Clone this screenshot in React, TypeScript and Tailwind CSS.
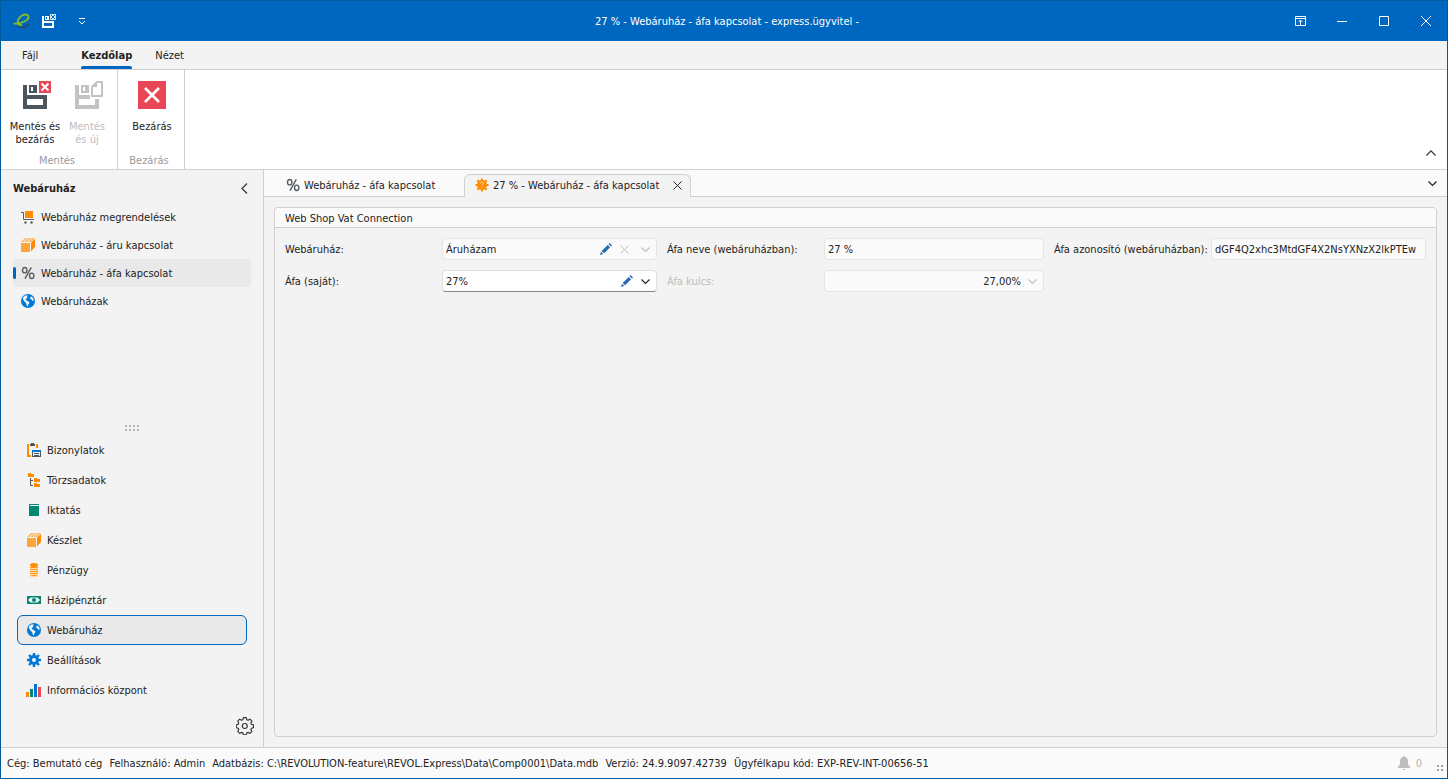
import type { ReactNode } from 'react';
import clsx from 'clsx';

type IconProps = { className?: string };

/* ---------- icons ---------- */

function Logo() {
  return (
    <svg width="18" height="16" viewBox="0 0 18 16" fill="none">
      <path d="M5 12.300c2.500 3 8 2.400 10.500-1.600" stroke="#1b4f7d" strokeWidth="2.200" />
      <path
        d="M.5 10.700c2.500 0 4.500-.2 7-.9C12.500 8.600 16 6 15.600 3.600 15.200 1.200 11.600.8 8.600 2.800 5.200 5 3.600 9 5.400 11.200c.9 1 2.200 1.200 3.600 1"
        stroke="#86bc25"
        strokeWidth="1.800"
      />
    </svg>
  );
}

function SaveCloseSmall() {
  return (
    <svg width="14" height="14" viewBox="0 0 14 14">
      <path fill="#fff" fillRule="evenodd" d="M0 2h2v5h10v7H0zM2 9v3h8V9z" />
      <path fill="#fff" fillRule="evenodd" d="M3 2h4v4H3zM4 3v2h1V3z" />
      <path fill="#cfe3f6" d="M8 0h6v6H8z" />
      <path stroke="#0067c0" d="M9 1l4 4M13 1L9 5" />
    </svg>
  );
}

function QuickMenu() {
  return (
    <svg width="8" height="8" viewBox="0 0 8 8" fill="none" stroke="#fff">
      <path d="M1 1.500h6M1 4l3 3 3-3" />
    </svg>
  );
}

function SaveClose() {
  return (
    <svg width="32" height="28" viewBox="-4 0 32 28">
      <path fill="#4d565c" fillRule="evenodd" d="M0 4h4v10h20v14H0zM4 18v6h16v-6z" />
      <path fill="#4d565c" fillRule="evenodd" d="M6 4h8v8H6zM8 6v4h2V6z" />
      <path fill="#e84855" d="M16 0h12v12H16z" />
      <path stroke="#fff" strokeWidth="2" d="M18.500 2.500l7 7M25.500 2.500l-7 7" />
    </svg>
  );
}

function SaveNew() {
  return (
    <svg width="32" height="28" viewBox="-4 0 32 28">
      <path fill="#c3c3c3" fillRule="evenodd" d="M0 4h4v10h11v4H4v6h16v-6h4v10H0z" />
      <path fill="#c3c3c3" fillRule="evenodd" d="M6 4h8v8H6zM8 6v4h2V6z" />
      <path fill="#fff" stroke="#c3c3c3" strokeWidth="2" d="M17 15V6l5-5h5v14z" />
      <path fill="#c3c3c3" d="M16 6l6-6v6z" />
    </svg>
  );
}

function CloseBig() {
  return (
    <svg width="28" height="28" viewBox="0 0 28 28">
      <path fill="#e84855" d="M0 0h28v28H0z" />
      <path stroke="#fff" strokeWidth="2.600" d="M7 7l14 14M21 7L7 21" />
    </svg>
  );
}

function Cross({ className }: IconProps) {
  return (
    <svg className={className} width="9" height="9" viewBox="0 0 9 9" fill="none" stroke="currentColor">
      <path d="M.5.5l8 8M8.500.5l-8 8" />
    </svg>
  );
}

function ChevronDown({ className }: IconProps) {
  return (
    <svg className={className} width="9" height="9" viewBox="0 0 9 9" fill="none" stroke="currentColor" strokeWidth="1.200">
      <path d="M.5 2.500l4 4 4-4" />
    </svg>
  );
}

function Pencil() {
  return (
    <svg width="12" height="12" viewBox="0 0 12 12" fill="#2469b3">
      <path d="M0 12l1-3.300L3.300 11zM1.700 7.900l6-6 2.400 2.400-6 6zM8.500 1.100L9.600 0 12 2.400l-1.100 1.100z" />
    </svg>
  );
}

function Cart() {
  return (
    <svg width="14" height="14" viewBox="0 0 14 14">
      <path fill="#ff8c00" d="M4 1h8v7H4z" />
      <path fill="none" stroke="#565e63" d="M0 2.500h2.500v7H13" />
      <circle cx="4.500" cy="12.500" r="1.200" fill="#565e63" />
      <circle cx="10.500" cy="12.500" r="1.200" fill="#565e63" />
    </svg>
  );
}

function Box() {
  return (
    <svg width="14" height="14" viewBox="0 0 14 14">
      <path fill="#ffa53a" d="M0 5h9v9H0z" />
      <path fill="#fbb968" d="M0 4l4-4h9.500L10 4z" />
      <path fill="#ff8c00" d="M10 4.500L14 .5V9l-4 4.500z" />
      <path stroke="#f3f3f3" d="M3 4l4-4M6.500 4l4-4" />
    </svg>
  );
}

function Percent() {
  return (
    <svg width="14" height="14" viewBox="0 0 14 14" fill="none" stroke="#565e63" strokeWidth="1.400">
      <ellipse cx="3.700" cy="4.200" rx="2.200" ry="2.700" />
      <ellipse cx="10.700" cy="9.800" rx="2.200" ry="2.700" />
      <path d="M10.300 1.300L4 12.700" />
    </svg>
  );
}

function Globe() {
  return (
    <svg width="14" height="14" viewBox="0 0 14 14">
      <circle cx="7" cy="7" r="7" fill="#0078d4" />
      <path
        fill="#f0f4f8"
        d="M2 3.200L4.800 1.300l2.200.5L5.800 3l.7.8-1.800 1.300.2 1L7.500 7.400l1.100 1.400-1.400 1.900-.4 2L5.700 11.200 5.100 9 3.400 7.400 1.900 5zM9.200 3.200l1.500-.6 1.600 1.800.5 2-1.200.7-1-1.500L9.300 5z"
      />
    </svg>
  );
}

function Documents() {
  return (
    <svg width="14" height="14" viewBox="0 0 14 14">
      <path fill="#ff8c00" d="M0 1h2v11h2v2H0zM9 1h2v4H9z" />
      <path fill="#4d565c" d="M3 1h1V0h3v1h1v2H3z" />
      <path fill="#4d565c" fillRule="evenodd" d="M5 7h9v7H5zM6 9v4h7V9z" />
      <path fill="#0078d4" d="M5 7h9v2H5z" />
      <path stroke="#4d565c" d="M7 10.500h5M7 12.500h5" />
    </svg>
  );
}

function FolderTree() {
  return (
    <svg width="14" height="14" viewBox="0 0 14 14">
      <path fill="#ff8c00" d="M1 0h3v1h3v3H1zM7 5h3v1h3v3H7zM7 10h3v1h3v3H7z" />
      <path fill="none" stroke="#4d565c" d="M3.500 5v7.500H6M3.500 7.500H6" />
    </svg>
  );
}

function Book() {
  return (
    <svg width="14" height="14" viewBox="0 0 14 14" fill="#008774">
      <path d="M2 1h10v1H3v1h9v10H2z" />
    </svg>
  );
}

function Coins() {
  return (
    <svg width="14" height="14" viewBox="0 0 14 14">
      <path fill="#ffd9a8" d="M3 2h8v12H3z" />
      <path stroke="#ff9a1f" d="M3 4.500h8M3 6.500h8M3 8.500h8M3 10.500h8M4 12.500h6" />
      <ellipse cx="7" cy="2" rx="4" ry="2" fill="#ff8c00" />
    </svg>
  );
}

function Banknote() {
  return (
    <svg width="14" height="14" viewBox="0 0 14 14">
      <path fill="#008774" d="M0 3h14v8H0z" />
      <path fill="#f3f3f3" d="M3.500 4.500h7l2 2v1l-2 2h-7l-2-2v-1z" />
      <circle cx="7" cy="7" r="2" fill="#008774" />
    </svg>
  );
}

function Cog() {
  return (
    <svg width="14" height="14" viewBox="0 0 14 14">
      <circle cx="7" cy="7" r="3.500" fill="none" stroke="#0078d4" strokeWidth="3" />
      <path
        stroke="#0078d4"
        strokeWidth="2.400"
        d="M7 0v3M7 11v3M0 7h3M11 7h3M2 2l2.200 2.200M9.800 9.800L12 12M12 2L9.800 4.200M4.200 9.800L2 12"
      />
    </svg>
  );
}

function Bars() {
  return (
    <svg width="16" height="14" viewBox="0 0 16 14">
      <path fill="#ff8c00" d="M0 9h3v5H0z" />
      <path fill="#008774" d="M4 6h3v8H4z" />
      <path fill="#0078d4" d="M8 1h3v13H8z" />
      <path fill="#e84855" d="M12 4h3v10h-3z" />
    </svg>
  );
}

function OrangeCog() {
  return (
    <svg width="14" height="14" viewBox="0 0 14 14">
      <circle cx="7" cy="7" r="5" fill="#ff8c00" />
      <path stroke="#ff8c00" strokeWidth="2.200" d="M7 .5v13M.5 7h13M2.300 2.300l9.400 9.400M11.700 2.300l-9.400 9.400" />
      <path fill="none" stroke="#ffe0b5" d="M5.500 5.500c0-2 3-2 3 0 0 1-1.500 1-1.500 2.300M7 9v1" />
    </svg>
  );
}

function GearOutline() {
  const body =
    'M7.500 1.200h3l.6 2.200 1.300.5 2-1.100 2.100 2.100-1.100 2 .5 1.300 2.200.6v3l-2.200.6-.5 1.300 1.100 2-2.100 2.100-2-1.100-1.300.5-.6 2.200h-3l-.6-2.200-1.300-.5-2 1.100-2.100-2.100 1.100-2-.5-1.300-2.200-.6v-3l2.200-.6.5-1.300-1.100-2 2.100-2.100 2 1.100 1.300-.5z';
  return (
    <svg width="18" height="18" viewBox="-0.300 0.500 19 19" fill="none" stroke="#333" strokeWidth="1.200" strokeLinejoin="round">
      <path d={body} />
      <circle cx="9" cy="10" r="2.600" />
    </svg>
  );
}

function Bell() {
  return (
    <svg width="12" height="14" viewBox="0 0 12 14" fill="#bdbdbd">
      <path d="M5 1a1 1 0 012 0c2 .5 3 2 3 4v3.500l2 2V12H0v-1.500l2-2V5c0-2 1-3.500 3-4zM4.800 13h2.400v1H4.800z" />
    </svg>
  );
}

/* ---------- data ---------- */

const shopItems = [
  { icon: Cart, label: 'Webáruház megrendelések' },
  { icon: Box, label: 'Webáruház - áru kapcsolat' },
  { icon: Percent, label: 'Webáruház - áfa kapcsolat', active: true },
  { icon: Globe, label: 'Webáruházak' },
];

const modules = [
  { icon: Documents, label: 'Bizonylatok' },
  { icon: FolderTree, label: 'Törzsadatok' },
  { icon: Book, label: 'Iktatás' },
  { icon: Box, label: 'Készlet' },
  { icon: Coins, label: 'Pénzügy' },
  { icon: Banknote, label: 'Házipénztár' },
  { icon: Globe, label: 'Webáruház', active: true },
  { icon: Cog, label: 'Beállítások' },
  { icon: Bars, label: 'Információs központ' },
];

const statusItems = [
  'Cég: Bemutató cég',
  'Felhasználó: Admin',
  'Adatbázis: C:\\REVOLUTION-feature\\REVOL.Express\\Data\\Comp0001\\Data.mdb',
  'Verzió: 24.9.9097.42739',
  'Ügyfélkapu kód: EXP-REV-INT-00656-51',
];

/* ---------- window parts ---------- */

const windowButton = 'flex h-10 w-[42px] items-center justify-center';

function TitleBar() {
  return (
    <header className="grid h-10 grid-cols-[1fr_auto_1fr] items-center bg-[#0067c0] text-white">
      <div className="flex items-center pl-3">
        <Logo />
        <button className="ml-[11px]" aria-label="Mentés és bezárás"><SaveCloseSmall /></button>
        <button className="ml-[22px]" aria-label="Gyorselérés"><QuickMenu /></button>
      </div>
      <h1 className="pl-1.5">27 % - Webáruház - áfa kapcsolat - express.ügyvitel -</h1>
      <div className="flex items-center justify-end">
        <button className={windowButton} aria-label="Menüszalag">
          <svg width="11" height="10" viewBox="0 0 11 10" fill="none" stroke="#fff">
            <path d="M.5.500h10v9H.5zM.5 2.500h10M5.500 9V4.500M3.500 6l2-2 2 2" />
          </svg>
        </button>
        <button className={windowButton} aria-label="Kis méret">
          <svg width="10" height="10" viewBox="0 0 10 10" stroke="#fff"><path d="M0 5.500h10" /></svg>
        </button>
        <button className={windowButton} aria-label="Teljes méret">
          <svg width="10" height="10" viewBox="0 0 10 10" fill="none" stroke="#fff"><path d="M.5.500h9v9h-9z" /></svg>
        </button>
        <button className={windowButton} aria-label="Ablak bezárása">
          <svg width="10" height="10" viewBox="0 0 10 10" stroke="#fff"><path d="M0 0l10 10M10 0L0 10" /></svg>
        </button>
      </div>
    </header>
  );
}

function RibbonButton({ icon, lines, disabled }: { icon: ReactNode; lines: string[]; disabled?: boolean }) {
  return (
    <button disabled={disabled} className={clsx('flex w-[52px] flex-col items-center', disabled && 'text-[#bdbdbd]')}>
      {icon}
      <span className="mt-[11px] leading-[13px] whitespace-nowrap">
        {lines.map((line) => <span key={line} className="block">{line}</span>)}
      </span>
    </button>
  );
}

function RibbonGroup({ caption, children }: { caption: string; children: ReactNode }) {
  return (
    <section className="flex min-w-[67px] flex-col justify-between border-r border-[#d0d0d0] pt-[11px]">
      <div className="flex pr-1 pl-2">{children}</div>
      <div className="pr-1 text-center text-[#9a9a9a]">{caption}</div>
    </section>
  );
}

function Ribbon() {
  return (
    <>
      <nav className="flex h-[29px] items-stretch border-b border-[#d0d0d0] pl-[21px]">
        <button className="flex items-center">Fájl</button>
        <button className="ml-[43px] flex flex-col items-center justify-between font-bold">
          <span className="pt-1.5">Kezdőlap</span>
          <span className="h-[3px] w-full rounded-t-xs bg-[#0067c0]" />
        </button>
        <button className="ml-[23px] flex items-center">Nézet</button>
      </nav>
      <div className="flex h-[100px] border-b border-[#d0d0d0] bg-white">
        <RibbonGroup caption="Mentés">
          <RibbonButton icon={<SaveClose />} lines={['Mentés és', 'bezárás']} />
          <RibbonButton icon={<SaveNew />} lines={['Mentés', 'és új']} disabled />
        </RibbonGroup>
        <RibbonGroup caption="Bezárás">
          <RibbonButton icon={<CloseBig />} lines={['Bezárás']} />
        </RibbonGroup>
        <button className="mr-[11px] mb-3 ml-auto self-end" aria-label="Menüszalag összecsukása">
          <svg width="10" height="8" viewBox="0 0 10 8" fill="none" stroke="#333" strokeWidth="1.200"><path d="M.5 6.500L5 1.800l4.500 4.700" /></svg>
        </button>
      </div>
    </>
  );
}

function Sidebar() {
  return (
    <aside className="flex w-[263px] shrink-0 flex-col border-r border-[#d0d0d0] px-3">
      <div className="flex h-[33px] items-center justify-between pt-[3px] pr-[3px]">
        <h2 className="font-bold">Webáruház</h2>
        <button aria-label="Összecsukás">
          <svg width="7" height="11" viewBox="0 0 7 11" fill="none" stroke="#333" strokeWidth="1.200"><path d="M6 .5l-5 5 5 5" /></svg>
        </button>
      </div>
      <ul>
        {shopItems.map(({ icon: Icon, label, active }) => (
          <li key={label}>
            <button className={clsx('flex h-7 w-[238px] items-center rounded', active && 'bg-[#e9e9e9]')}>
              <span className={clsx('mr-[5px] h-3 w-[3px] rounded-xs', active && 'bg-[#0067c0]')} />
              <Icon />
              <span className="ml-1.5">{label}</span>
            </button>
          </li>
        ))}
      </ul>
      <div className="flex-1" />
      <svg className="mx-auto mb-[3px]" width="14" height="7" viewBox="0 0 14 7" fill="#b4b4b4">
        <path d="M0 0h2v2H0zM4 0h2v2H4zM8 0h2v2H8zM12 0h2v2h-2zM0 4h2v2H0zM4 4h2v2H4zM8 4h2v2H8zM12 4h2v2h-2z" />
      </svg>
      <ul className="px-1">
        {modules.map(({ icon: Icon, label, active }) => (
          <li key={label}>
            <button
              className={clsx(
                'flex h-[30px] w-full items-center rounded-md border pl-2',
                active ? 'border-[#0067c0] bg-[#e9e9e9]' : 'border-transparent',
              )}
            >
              <span className="flex w-4 justify-center"><Icon /></span>
              <span className="ml-[5px]">{label}</span>
            </button>
          </li>
        ))}
      </ul>
      <button className="mt-3 mr-[-3px] mb-3 self-end" aria-label="Navigáció beállításai"><GearOutline /></button>
    </aside>
  );
}

function DocumentTabs() {
  return (
    <div className="flex h-[27px] items-end bg-[#fafafa]">
      <div className="h-full w-[22px] border-b border-[#d0d0d0]" />
      <button className="flex h-full w-[178px] items-center border-b border-[#d0d0d0] pt-1 whitespace-nowrap">
        <Percent />
        <span className="ml-1">Webáruház - áfa kapcsolat</span>
      </button>
      <div className="flex h-[23px] w-[227px] items-center rounded-t-md border border-b-0 border-[#d0d0d0] bg-[#f3f3f3] pr-2 pb-0.5 pl-2.5">
        <button className="flex items-center whitespace-nowrap">
          <OrangeCog />
          <span className="ml-1">27 % - Webáruház - áfa kapcsolat</span>
        </button>
        <button className="ml-auto" aria-label="Lap bezárása"><Cross /></button>
      </div>
      <div className="flex h-full flex-1 items-center justify-end border-b border-[#d0d0d0] pr-2.5">
        <button aria-label="Megnyitott lapok"><ChevronDown /></button>
      </div>
    </div>
  );
}

const readOnlyBox = 'relative h-[22px] rounded border border-[#e5e5e5] bg-[#fafafa]';

function VatForm() {
  return (
    <form className="grid grid-cols-[147px_215fr_147px_220fr_147px_215fr] items-center gap-2.5 p-2.5">
      <label htmlFor="shop">Webáruház:</label>
      <div className={readOnlyBox}>
        <select id="shop" disabled className="h-full w-full appearance-none px-[3px] disabled:opacity-100">
          <option>Áruházam</option>
        </select>
        <div className="absolute inset-y-0 right-1.5 flex items-center gap-2 text-[#c0c0c0]">
          <button type="button" aria-label="Szerkesztés"><Pencil /></button>
          <button type="button" disabled aria-label="Törlés"><Cross /></button>
          <ChevronDown className="ml-1" />
        </div>
      </div>
      <label htmlFor="vatName" className="whitespace-nowrap">Áfa neve (webáruházban):</label>
      <div className={readOnlyBox}>
        <input id="vatName" readOnly defaultValue="27 %" className="h-full w-full px-[3px] outline-none" />
      </div>
      <label htmlFor="vatId" className="whitespace-nowrap">Áfa azonosító (webáruházban):</label>
      <div className={readOnlyBox}>
        <input id="vatId" readOnly defaultValue="dGF4Q2xhc3MtdGF4X2NsYXNzX2lkPTEw" className="h-full w-full px-[3px] outline-none" />
      </div>

      <label htmlFor="ownVat">Áfa (saját):</label>
      <div className="relative h-[22px] rounded border border-[#e0e0e0] border-b-[#868686] bg-white">
        <select id="ownVat" className="h-full w-full appearance-none px-[3px] outline-none">
          <option>27%</option>
        </select>
        <div className="pointer-events-none absolute inset-y-0 right-1.5 flex items-center gap-2">
          <button type="button" className="pointer-events-auto" aria-label="Szerkesztés"><Pencil /></button>
          <ChevronDown />
        </div>
      </div>
      <label htmlFor="vatRate" className="text-[#bdbdbd]">Áfa kulcs:</label>
      <div className={readOnlyBox}>
        <input id="vatRate" readOnly defaultValue="27,00%" className="h-full w-full pr-[22px] text-right outline-none" />
        <button type="button" disabled className="absolute inset-y-0 right-1.5 text-[#c0c0c0]" aria-label="Számológép"><ChevronDown /></button>
      </div>
    </form>
  );
}

function StatusBar() {
  return (
    <footer className="flex h-[31px] items-center gap-[7px] border-t border-[#d0d0d0] bg-[#fafafa] pr-1 pl-1.5 whitespace-nowrap">
      {statusItems.map((item) => <span key={item}>{item}</span>)}
      <button className="ml-auto flex items-center gap-1.5 text-[#b4b4b4]" aria-label="Értesítések">
        <Bell />
        <span>0</span>
      </button>
      <svg className="mb-[7px] ml-2 self-end" width="6" height="6" viewBox="0 0 6 6" fill="#a0a0a0">
        <path d="M0 0h2v2H0zM4 0h2v2H4zM0 4h2v2H0zM4 4h2v2H4z" />
      </svg>
    </footer>
  );
}

export default function App() {
  return (
    <div className="flex min-h-screen flex-col border border-[#005a9e] bg-[#f3f3f3] font-['DejaVu_Sans_Condensed','Noto_Sans',sans-serif] text-[11px] leading-[17px] text-[#222]">
      <TitleBar />
      <Ribbon />
      <div className="flex flex-1">
        <Sidebar />
        <main className="flex min-w-0 flex-1 flex-col">
          <DocumentTabs />
          <section className="m-2.5 flex-1 rounded border border-[#d0d0d0]">
            <h2 className="h-5 rounded-t border-b border-[#d0d0d0] bg-[#fafafa] px-2.5 leading-[21px]">Web Shop Vat Connection</h2>
            <VatForm />
          </section>
        </main>
      </div>
      <StatusBar />
    </div>
  );
}
